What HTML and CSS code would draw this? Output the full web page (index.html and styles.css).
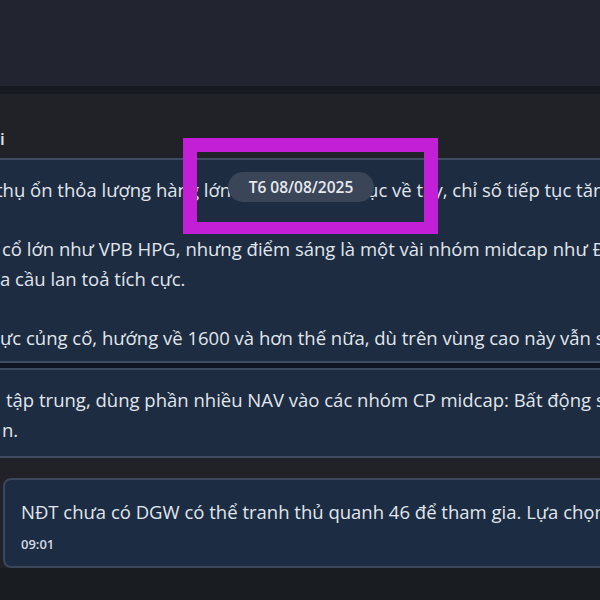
FILE: index.html
```html
<!DOCTYPE html>
<html>

<head>
    <title>Chat</title>
    <link rel="stylesheet" href="styles.css">
</head>

<body>
    <div class="topbar"></div>
    <div class="chat">
        <div class="sender">i</div>
        <div class="bubble first">
            <div class="line pull">thụ ổn thỏa lượng hàng lớn nhờ tiền hồi phục về tay, chỉ số tiếp tục tăng</div>
            <div class="line">&nbsp;</div>
            <div class="line indent">cổ lớn như VPB HPG, nhưng điểm sáng là một vài nhóm midcap như ĐGW, GEX</div>
            <div class="line">a cầu lan toả tích cực.</div>
            <div class="line">&nbsp;</div>
            <div class="line">ực củng cố, hướng về 1600 và hơn thế nữa, dù trên vùng cao này vẫn sẽ có rung lắc</div>
        </div>
        <div class="bubble second">
            <div class="line wide-indent">tập trung, dùng phần nhiều NAV vào các nhóm CP midcap: Bất động sản, bán lẻ</div>
            <div class="line indent">n.</div>
        </div>
        <div class="bubble reply">
            <div class="line">NĐT chưa có DGW có thể tranh thủ quanh 46 để tham gia. Lựa chọn hợp lý</div>
            <div class="time">09:01</div>
        </div>
    </div>

    <div class="date-pill">T6 08/08/2025</div>
    <div class="highlight"></div>
</body>

</html>
```

FILE: styles.css
```css
body {
    margin: 0;
    padding: 0;
    background-color: #191c20;
    font-family: "Open Sans", "Noto Sans", sans-serif;
    color: #e0e6ed;
    overflow: hidden;
}

.topbar {
    height: 86px;
    background-color: #22252f;
    border-bottom: 8px solid #171a20;
}

.chat {
    background-color: #212228;
    padding-top: 34px;
}

.sender {
    font-size: 17px;
    font-weight: 600;
    height: 30px;
    line-height: 22px;
    color: #e2e6ec;
}

.bubble {
    background-color: #1d2c41;
    border-top: 2px solid #3f4d63;
    border-bottom: 2px solid #3f4d63;
    overflow: hidden;
    font-size: 18.5px;
    line-height: 29.5px;
}

.line {
    white-space: nowrap;
}

.pull {
    margin-left: -4px;
}

.indent {
    padding-left: 2px;
}

.wide-indent {
    padding-left: 6px;
}

.first {
    padding: 15px 0 9px 0;
}

.second {
    margin-top: 5px;
    padding: 15px 0 12px 0;
    border-top-color: #3a4860;
    box-shadow: 0 -5px 0 #0f1520;
}

.reply {
    margin: 20px -40px 0 3px;
    padding: 17px 16px 12px 16px;
    border: 2px solid #3b485c;
    border-radius: 8px;
    background-color: #1c2c42;
}

.time {
    font-size: 13px;
    font-weight: 600;
    line-height: 20px;
    margin-top: 7px;
    color: #d3dae3;
}

.date-pill {
    position: absolute;
    top: 172px;
    left: 228px;
    width: 146px;
    height: 30px;
    line-height: 30px;
    border-radius: 15px;
    background-color: #3a4558;
    color: #e6eaf0;
    font-size: 15.5px;
    font-weight: 600;
    text-align: center;
}

.highlight {
    position: absolute;
    top: 138px;
    left: 183px;
    width: 227px;
    height: 70px;
    border: 14px solid #c21fd6;
    border-bottom-width: 12px;
}
```
